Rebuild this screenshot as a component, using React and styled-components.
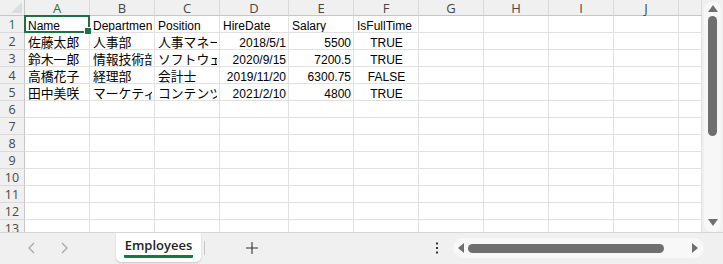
import React from 'react';
import styled, { createGlobalStyle } from 'styled-components';

const GlobalStyle = createGlobalStyle`
    html, body {
        margin: 0;
        padding: 0;
        background: #f0f0f0;
    }
    * {
        box-sizing: border-box;
    }
`;

const COLS = ['A', 'B', 'C', 'D', 'E', 'F', 'G', 'H', 'I', 'J', ''];
const WIDTHS = [65, 65, 65, 69, 65, 65, 65, 65, 65, 65, 23];

const rows = [
    ['Name', 'Department', 'Position', 'HireDate', 'Salary', 'IsFullTime'],
    ['佐藤太郎', '人事部', '人事マネージャー', '2018/5/1', '5500', 'TRUE'],
    ['鈴木一郎', '情報技術部', 'ソフトウェアエンジニア', '2020/9/15', '7200.5', 'TRUE'],
    ['高橋花子', '経理部', '会計士', '2019/11/20', '6300.75', 'FALSE'],
    ['田中美咲', 'マーケティング部', 'コンテンツクリエイター', '2021/2/10', '4800', 'TRUE'],
];

const CJK = /[\u3040-\u30ff\u4e00-\u9fff]/;

// row 1 is text, everything below is typed: dates/numbers right, booleans centred
const alignFor = (r, c) => {
    if (r === 0) return 'left';
    if (c === 3 || c === 4) return 'right';
    if (c === 5) return 'center';
    return 'left';
};

const Window = styled.div`
    width: 723px;
    height: 264px;
    display: flex;
    flex-direction: column;
    background: #f0f0f0;
    overflow: hidden;
`;

const Main = styled.div`
    height: 232px;
    display: flex;
`;

const Sheet = styled.div`
    width: 702px;
    height: 232px;
    overflow: hidden;
    background: #fff;
    display: grid;
    grid-template-columns: 25px ${WIDTHS.map(w => `${w}px`).join(' ')};
    grid-auto-rows: 17px;
    grid-template-rows: 16px;
    align-content: start;
`;

const Corner = styled.div`
    position: relative;
    background: #f0f0f0;
    border-right: 1px solid #c6c6c6;
    border-bottom: 1px solid #c6c6c6;

    &::after {
        content: '';
        position: absolute;
        right: 2px;
        bottom: 2px;
        border-left: 11px solid transparent;
        border-bottom: 11px solid #dcdcdc;
    }
`;

const ColHead = styled.div`
    background: #f0f0f0;
    border-right: 1px solid #dadada;
    border-bottom: 1px solid ${p => (p.active ? '#a9a9a9' : '#c6c6c6')};
    color: ${p => (p.active ? '#1e7145' : '#474747')};
    font-family: 'Open Sans', 'Liberation Sans', sans-serif;
    font-size: 13px;
    line-height: 16px;
    text-align: center;
`;

const RowHead = styled.div`
    background: #f0f0f0;
    border-right: 1px solid #c6c6c6;
    border-bottom: 1px solid #dadada;
    color: ${p => (p.active ? '#1e7145' : '#474747')};
    font-family: 'Open Sans', 'Liberation Sans', sans-serif;
    font-size: 12.5px;
    line-height: 16px;
    padding-top: 1px;
    text-align: center;
`;

const Cell = styled.div`
    position: relative;
    border-right: 1px solid #e1e1e1;
    border-bottom: 1px solid #e1e1e1;
    padding: 2px 2px 0 3px;
    font-family: 'Liberation Sans', 'Noto Sans CJK JP', sans-serif;
    font-size: ${p => (p.cjk ? '12.8px' : '12px')};
    line-height: 14px;
    color: #000;
    white-space: nowrap;
    overflow: ${p => (p.selected ? 'visible' : 'hidden')};
    text-align: ${p => p.align};
`;

const CellText = styled.span`
    display: block;
    overflow: hidden;
    padding-top: 1px;
`;

const Selection = styled.div`
    position: absolute;
    z-index: 2;
    left: -1px;
    top: -1px;
    right: -1px;
    bottom: -1px;
    border: 2px solid #1e7145;
    pointer-events: none;

    &::after {
        content: '';
        position: absolute;
        right: -4px;
        bottom: -4px;
        width: 6px;
        height: 6px;
        background: #1e7145;
        border: 1px solid #fff;
    }
`;

const VScroll = styled.div`
    width: 21px;
    height: 232px;
    padding: 2px 2px 0 2px;
    background: #f0f0f0;
`;

const VTrack = styled.div`
    height: 100%;
    border-radius: 8px;
    background: #f7f7f7;
    display: flex;
    flex-direction: column;
    align-items: center;
    padding-top: 3px;
`;

const VThumb = styled.div`
    width: 9px;
    height: 120px;
    margin-top: 4px;
    border-radius: 5px;
    background: #6f6f6f;
`;

const Spacer = styled.div`
    flex: 1;
`;

const Arrow = styled.div`
    width: 0;
    height: 0;
    ${p =>
        p.dir === 'up' &&
        'border-left: 5px solid transparent; border-right: 5px solid transparent; border-bottom: 7px solid #6f6f6f;'}
    ${p =>
        p.dir === 'down' &&
        'border-left: 5px solid transparent; border-right: 5px solid transparent; border-top: 7px solid #6f6f6f; margin-bottom: 6px;'}
    ${p =>
        p.dir === 'left' &&
        'border-top: 5px solid transparent; border-bottom: 5px solid transparent; border-right: 6px solid #6f6f6f;'}
    ${p =>
        p.dir === 'right' &&
        'border-top: 5px solid transparent; border-bottom: 5px solid transparent; border-left: 6px solid #6f6f6f;'}
`;

const Bottom = styled.div`
    height: 32px;
    display: flex;
    align-items: flex-start;
    background: #f0f0f0;
    border-top: 1px solid #d6d6d6;
    padding-left: 16px;
`;

const NavButton = styled.button`
    width: 32px;
    height: 30px;
    border: none;
    background: none;
    padding: 0;
    display: flex;
    align-items: center;
    justify-content: center;
`;

const Tab = styled.div`
    margin-left: 36px;
    width: 85px;
    height: 29px;
    background: #fff;
    border-radius: 0 0 5px 5px;
    box-shadow: 0 1px 2px rgba(0, 0, 0, 0.18);
    display: flex;
    flex-direction: column;
    align-items: center;
    padding-top: 3px;
`;

const TabLabel = styled.span`
    font-family: 'Open Sans', 'Liberation Sans', sans-serif;
    font-weight: 600;
    font-size: 13px;
    line-height: 18px;
    color: #242424;
    padding: 0 1px 1px;
    border-bottom: 3px solid #107c41;
    border-radius: 1px;
`;

const Divider = styled.div`
    width: 1px;
    height: 14px;
    margin: 8px 0 0 3px;
    background: #c8c8c8;
`;

const PlusButton = styled(NavButton)`
    margin-left: 31px;
`;

const MoreButton = styled(NavButton)`
    width: 16px;
`;

const HScroll = styled.div`
    width: 251px;
    height: 20px;
    margin: 5px 19px 0 8px;
    border-radius: 10px;
    background: #f8f8f8;
    display: flex;
    align-items: center;
    padding: 0 6px 0 5px;
    gap: 4px;
`;

const HThumb = styled.div`
    width: 196px;
    height: 9px;
    border-radius: 5px;
    background: #6f6f6f;
`;

const Chevron = ({ dir }) => (
    <svg width="10" height="12" viewBox="0 0 10 12">
        <path
            d={dir === 'left' ? 'M7 1 L2 6 L7 11' : 'M3 1 L8 6 L3 11'}
            fill="none"
            stroke="#a3a3a3"
            strokeWidth="1.2"
        />
    </svg>
);

const App = () => (
    <>
        <GlobalStyle />
        <Window>
            <Main>
                <Sheet>
                    <Corner />
                    {COLS.map((c, i) => (
                        <ColHead key={i} active={i === 0}>
                            {c}
                        </ColHead>
                    ))}
                    {Array.from({ length: 14 }).map((_, r) => (
                        <React.Fragment key={r}>
                            <RowHead active={r === 0}>{r + 1}</RowHead>
                            {COLS.map((_, c) => {
                                const value = rows[r] ? rows[r][c] || '' : '';
                                const selected = r === 0 && c === 0;
                                return (
                                    <Cell
                                        key={c}
                                        align={alignFor(r, c)}
                                        selected={selected}
                                        cjk={CJK.test(value)}
                                    >
                                        <CellText>{value}</CellText>
                                        {selected && <Selection />}
                                    </Cell>
                                );
                            })}
                        </React.Fragment>
                    ))}
                </Sheet>
                <VScroll>
                    <VTrack>
                        <Arrow dir="up" />
                        <VThumb />
                        <Spacer />
                        <Arrow dir="down" />
                    </VTrack>
                </VScroll>
            </Main>
            <Bottom>
                <NavButton>
                    <Chevron dir="left" />
                </NavButton>
                <NavButton>
                    <Chevron dir="right" />
                </NavButton>
                <Tab>
                    <TabLabel>Employees</TabLabel>
                </Tab>
                <Divider />
                <PlusButton>
                    <svg width="14" height="14" viewBox="0 0 14 14">
                        <path d="M7 1 V13 M1 7 H13" stroke="#333" strokeWidth="1.1" />
                    </svg>
                </PlusButton>
                <Spacer />
                <MoreButton>
                    <svg width="4" height="14" viewBox="0 0 4 14">
                        <rect x="1" y="1.5" width="2" height="2" fill="#333" />
                        <rect x="1" y="6" width="2" height="2" fill="#333" />
                        <rect x="1" y="10.5" width="2" height="2" fill="#333" />
                    </svg>
                </MoreButton>
                <HScroll>
                    <Arrow dir="left" />
                    <HThumb />
                    <Spacer />
                    <Arrow dir="right" />
                </HScroll>
            </Bottom>
        </Window>
    </>
);

export default App;
